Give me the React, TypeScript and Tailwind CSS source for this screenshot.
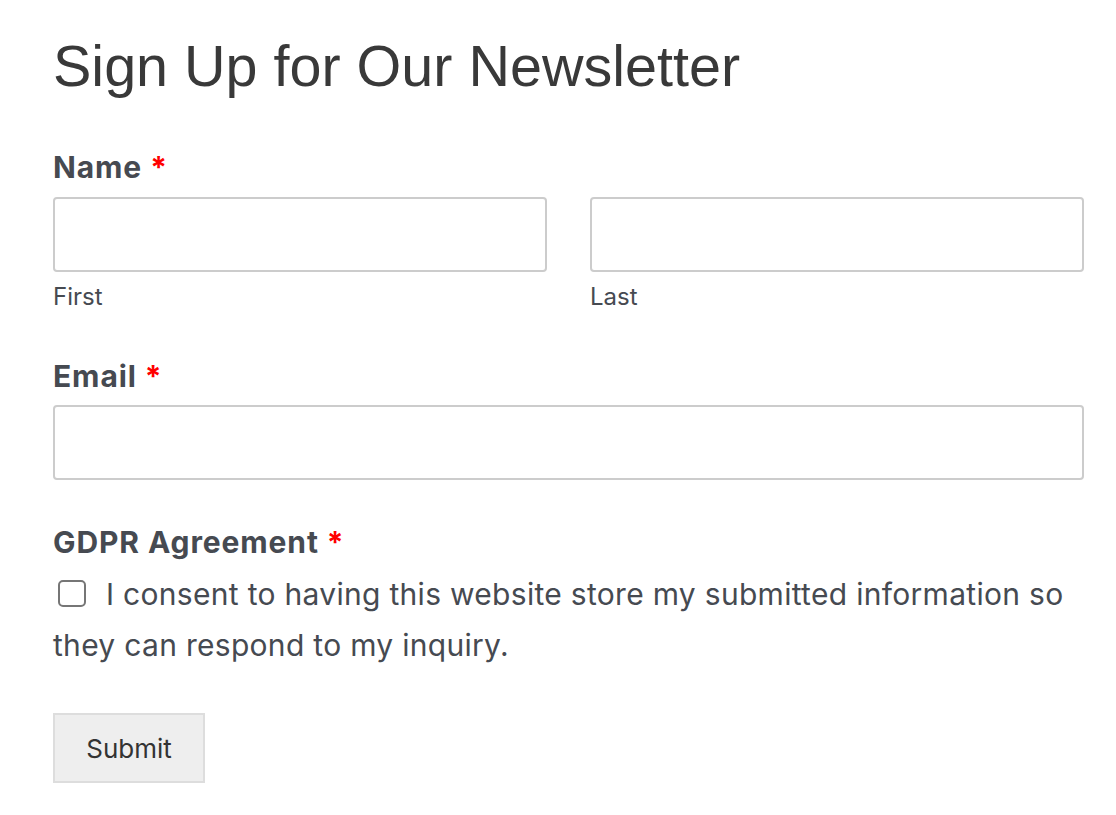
export default function App() {
  return (
    <div className="min-h-screen bg-white px-[53px] pt-[30px] font-['Inter','Noto_Sans',sans-serif] text-[#464a51]">
      <h1 className="font-['Liberation_Sans','Arial',sans-serif] text-[57.5px] leading-[72px] font-normal text-[#393939]">
        Sign Up for Our Newsletter
      </h1>

      <form className="mt-[48px] flex w-[1031px] flex-col" onSubmit={(e) => e.preventDefault()}>
        {/* Name */}
        <div className="flex flex-col">
          <label className="text-[30px] leading-[34px] font-bold tracking-[0.9px]">
            Name <span className="text-[#ff0000]">*</span>
          </label>
          <div className="mt-[13px] grid grid-cols-2 gap-[43px]">
            <div className="flex flex-col">
              <input type="text" className="h-[75px] rounded-[4px] border-2 border-[#cccccc] bg-white px-3 outline-none" />
              <span className="mt-[9px] text-[24px] leading-[32px]">First</span>
            </div>
            <div className="flex flex-col">
              <input type="text" className="h-[75px] rounded-[4px] border-2 border-[#cccccc] bg-white px-3 outline-none" />
              <span className="mt-[9px] text-[24px] leading-[32px]">Last</span>
            </div>
          </div>
        </div>

        {/* Email */}
        <div className="mt-[46px] flex flex-col">
          <label className="text-[30px] leading-[34px] font-bold tracking-[0.9px]">
            Email <span className="text-[#ff0000]">*</span>
          </label>
          <input type="email" className="mt-[12px] h-[75px] rounded-[4px] border-2 border-[#cccccc] bg-white px-3 outline-none" />
        </div>

        {/* GDPR */}
        <div className="mt-[45px] flex flex-col">
          <label className="text-[30px] leading-[34px] font-bold tracking-[0.9px]">
            GDPR Agreement <span className="text-[#ff0000]">*</span>
          </label>
          <p className="mt-[10px] text-[30px] leading-[51px] tracking-[0.3px]">
            <span className="mr-[20px] ml-[5px] inline-block h-[27px] w-[28px] rounded-[5px] border-2 border-[#767676] align-[-2px]" />
            I consent to having this website store my submitted information so they can respond to my inquiry.
          </p>
        </div>

        <div className="mt-[42px]">
          <button type="submit" className="h-[70px] w-[152px] border-2 border-[#dddddd] bg-[#eeeeee] text-[26px] text-[#333333]">
            Submit
          </button>
        </div>
      </form>
    </div>
  );
}
